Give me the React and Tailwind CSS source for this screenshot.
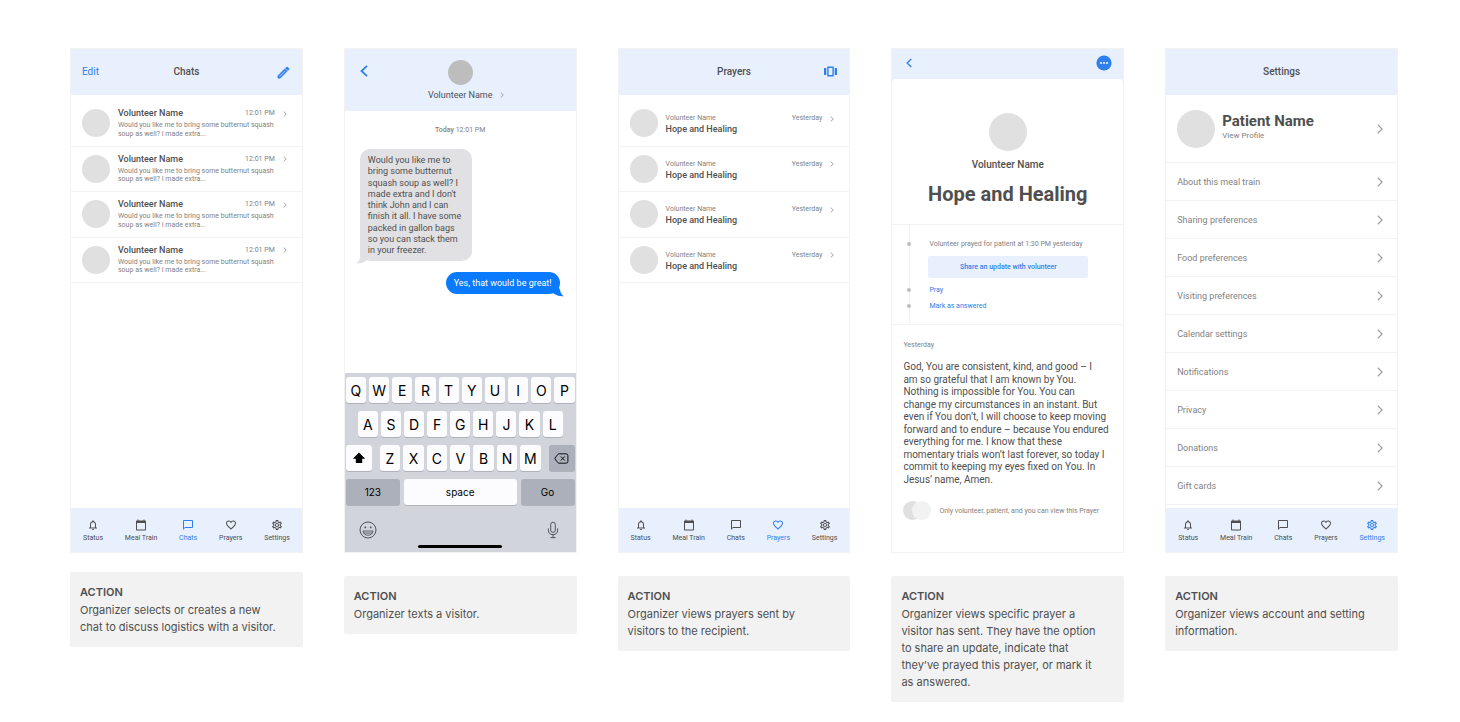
import React from "react";
import clsx from "clsx";
import { MdNotificationsNone, MdFavoriteBorder, MdOutlineSettings } from "react-icons/md";

function Chevron({ className }) {
  return (
    <svg viewBox="0 0 6 10" fill="none" stroke="currentColor" className={className} aria-hidden="true">
      <path d="M0.8 0.8 L5.1 5 L0.8 9.2" strokeWidth="1.2" />
    </svg>
  );
}

function BackIcon({ className }) {
  return (
    <svg viewBox="0 0 8 12" fill="none" stroke="currentColor" className={className} aria-hidden="true">
      <path d="M7 0.8 L1.5 6 L7 11.2" strokeWidth="1.8" />
    </svg>
  );
}

function PencilIcon({ className }) {
  return (
    <svg viewBox="0 0 24 24" fill="currentColor" stroke="currentColor" strokeWidth="0.9" className={className} aria-hidden="true">
      <path d="M14.06 9.02l.92.92L5.92 19H5v-.92l9.06-9.06M17.66 3c-.25 0-.51.1-.7.29l-1.83 1.83 3.75 3.75 1.83-1.83a.996.996 0 0 0 0-1.41l-2.34-2.34c-.2-.2-.45-.29-.71-.29zm-3.6 3.19L3 17.25V21h3.75L17.81 9.94l-3.75-3.75z" fillRule="evenodd" />
    </svg>
  );
}

function CarouselIcon({ className }) {
  return (
    <svg viewBox="0 0 13 11" fill="currentColor" className={className} aria-hidden="true">
      <rect x="0" y="2" width="2.3" height="7" />
      <rect x="10.7" y="2" width="2.3" height="7" />
      <path d="M3.2 0.4 H9.8 V10.6 H3.2 Z M4.6 1.9 V9.1 H8.4 V1.9 Z" fillRule="evenodd" />
    </svg>
  );
}

function CalendarIcon({ className }) {
  return (
    <svg viewBox="0 0 24 24" fill="currentColor" className={className} aria-hidden="true">
      <path d="M20 3h-1V1h-2v2H7V1H5v2H4c-1.1 0-2 .9-2 2v16c0 1.1.9 2 2 2h16c1.1 0 2-.9 2-2V5c0-1.1-.9-2-2-2zm0 18H4V8h16v13z" />
    </svg>
  );
}

function ChatIcon({ className }) {
  return (
    <svg viewBox="0 0 24 24" fill="currentColor" className={className} aria-hidden="true">
      <path d="M20 2H4c-1.1 0-2 .9-2 2v18l4-4h14c1.1 0 2-.9 2-2V4c0-1.1-.9-2-2-2zm0 14H6l-2 2V4h16v12z" />
    </svg>
  );
}

const TABS = [
  { label: "Status", Icon: MdNotificationsNone },
  { label: "Meal Train", Icon: CalendarIcon },
  { label: "Chats", Icon: ChatIcon },
  { label: "Prayers", Icon: MdFavoriteBorder },
  { label: "Settings", Icon: MdOutlineSettings },
];

function TabBar({ active }) {
  return (
    <nav className="flex h-[44px] items-center justify-between bg-[#e8f0fe] px-3 pt-px">
      {TABS.map(({ label, Icon }) => (
        <a
          key={label}
          href="#"
          className={clsx(
            "flex flex-col items-center gap-[3px] text-[7px] leading-[8px]",
            label === active ? "text-[#2f80ed]" : "text-[#4f4f4f]"
          )}
        >
          <Icon className="size-[12px]" />
          {label}
        </a>
      ))}
    </nav>
  );
}

function Column({ children, caption, tight }) {
  return (
    <section className="min-w-0">
      <div className="flex h-[505px] flex-col overflow-hidden border border-[#f2f2f2] bg-white">{children}</div>
      <div
        className={clsx(
          "rounded-[2px] bg-[#f2f2f2] pt-3 pr-6 pb-[11px] pl-[10px] font-[Inter,sans-serif] text-[11px] leading-[17px] text-[#4f4f4f]",
          tight ? "mt-[19px]" : "mt-[23px]"
        )}
      >
        <h2 className="font-semibold">ACTION</h2>
        <p className="mt-px">{caption}</p>
      </div>
    </section>
  );
}

function TitleBar({ title, left, right }) {
  return (
    <header className="grid h-[46px] shrink-0 grid-cols-[1fr_auto_1fr] items-center bg-[#e8f0fe] px-[11px] text-[10px] leading-[12px]">
      <div>{left}</div>
      <h1 className="font-medium text-[#4f4f4f]">{title}</h1>
      <div className="flex justify-end">{right}</div>
    </header>
  );
}

const FOUR = [0, 1, 2, 3];

function ChatsScreen() {
  return (
    <>
      <TitleBar
        title="Chats"
        left={<button className="text-[#2f80ed]">Edit</button>}
        right={
          <button aria-label="New chat" className="text-[#2f80ed]">
            <PencilIcon className="size-[15px]" />
          </button>
        }
      />
      <ul className="mt-[6px] grid h-[182px] shrink-0 grid-rows-4">
        {FOUR.map((i) => (
          <li key={i} className="flex items-center gap-2 border-b border-[#f2f2f2] pr-[15px] pl-[11px]">
            <div className="size-[28px] shrink-0 rounded-full bg-[#e0e0e0]" />
            <div className="min-w-0 flex-1">
              <div className="flex items-center leading-[11px]">
                <h2 className="flex-1 text-[9px] font-medium text-[#4f4f4f]">Volunteer Name</h2>
                <time className="text-[7px] text-[#828282]">12:01 PM</time>
                <Chevron className="ml-2 h-[6px] w-[4px] text-[#828282]" />
              </div>
              <p className="mt-[2px] pr-2 text-[7px] leading-tight text-[#828282]">
                Would you like me to bring some butternut squash soup as well? I made extra...
              </p>
            </div>
          </li>
        ))}
      </ul>
      <div className="flex-1" />
      <TabBar active="Chats" />
    </>
  );
}

function PrayersScreen() {
  return (
    <>
      <TitleBar
        title="Prayers"
        right={
          <button aria-label="Carousel view" className="mr-px pb-px text-[#2f80ed]">
            <CarouselIcon className="h-[11px] w-[13px]" />
          </button>
        }
      />
      <ul className="mt-[6px] grid h-[182px] shrink-0 grid-rows-4">
        {FOUR.map((i) => (
          <li key={i} className="flex items-center gap-2 border-b border-[#f2f2f2] pr-[15px] pl-[11px]">
            <div className="size-[28px] shrink-0 rounded-full bg-[#e0e0e0]" />
            <div className="min-w-0 flex-1 pt-[2px] leading-[11px] text-[#828282]">
              <div className="flex items-center text-[7px]">
                <p className="flex-1">Volunteer Name</p>
                <time>Yesterday</time>
                <Chevron className="ml-2 h-[6px] w-[4px]" />
              </div>
              <h2 className="text-[9px] font-medium text-[#4f4f4f]">Hope and Healing</h2>
            </div>
          </li>
        ))}
      </ul>
      <div className="flex-1" />
      <TabBar active="Prayers" />
    </>
  );
}

const KEY = "flex h-[26px] items-center justify-center rounded-[3px] shadow-[0_1px_0_#8d909680]";

function LetterKeys({ letters }) {
  return letters.split("").map((c) => (
    <button key={c} className={clsx(KEY, "min-w-0 flex-1 bg-[#fcfcfe] text-[14px]")}>
      {c}
    </button>
  ));
}

function Keyboard() {
  return (
    <div className="flex h-[179px] flex-col bg-[#d1d4db] px-px pt-1 font-[Inter,sans-serif] text-black">
      <div className="flex flex-col gap-2">
        <div className="flex gap-[3px]">
          <LetterKeys letters="QWERTYUIOP" />
        </div>
        <div className="flex gap-[3px] px-3">
          <LetterKeys letters="ASDFGHJKL" />
        </div>
        <div className="flex justify-between gap-2">
          <button aria-label="Shift" className={clsx(KEY, "w-[26px] bg-[#fcfcfe]")}>
            <svg viewBox="0 0 14 12" className="h-[12px] w-[14px]" fill="currentColor" aria-hidden="true">
              <path d="M7 0.6 L13.2 6.8 H10.2 V10.4 Q10.2 11 9.6 11 H4.4 Q3.8 11 3.8 10.4 V6.8 H0.8 Z" />
            </svg>
          </button>
          <div className="flex flex-1 gap-[3px]">
            <LetterKeys letters="ZXCVBNM" />
          </div>
          <button aria-label="Delete" className={clsx(KEY, "w-[26px] bg-[#abb0ba]")}>
            <svg viewBox="0 0 16 12" className="h-[11px] w-[15px]" fill="none" stroke="currentColor" aria-hidden="true">
              <path d="M5.2 0.9 H13 Q15 0.9 15 2.9 V9.1 Q15 11.1 13 11.1 H5.2 Q4.6 11.1 4.1 10.6 L0.9 6.5 Q0.6 6 0.9 5.5 L4.1 1.4 Q4.6 0.9 5.2 0.9 Z" />
              <path d="M7.2 3.8 L11.6 8.2 M11.6 3.8 L7.2 8.2" />
            </svg>
          </button>
        </div>
        <div className="flex gap-1 text-[10px]">
          <button className={clsx(KEY, "w-[54px] bg-[#abb0ba]")}>123</button>
          <button className={clsx(KEY, "flex-1 bg-[#fcfcfe]")}>space</button>
          <button className={clsx(KEY, "w-[54px] bg-[#abb0ba]")}>Go</button>
        </div>
      </div>
      <div className="mt-4 flex items-center justify-between pr-4 pl-[13px] text-[#50555c]">
        <button aria-label="Emoji">
          <svg viewBox="0 0 18 18" className="size-[18px]" fill="none" stroke="currentColor" aria-hidden="true">
            <circle cx="9" cy="9" r="8" />
            <path d="M4 10 H14 Q13.4 14.2 9 14.2 Q4.6 14.2 4 10 Z M4.8 12 H13.2" strokeWidth="0.9" />
            <circle cx="6.3" cy="6.4" r="0.9" fill="currentColor" stroke="none" />
            <circle cx="11.7" cy="6.4" r="0.9" fill="currentColor" stroke="none" />
          </svg>
        </button>
        <button aria-label="Dictate">
          <svg viewBox="0 0 12 18" className="h-[18px] w-[12px]" fill="none" stroke="currentColor" aria-hidden="true">
            <rect x="3.7" y="1.2" width="4.6" height="10.2" rx="2.3" />
            <path d="M1.4 7.5 V9.2 Q1.4 13.6 6 13.6 Q10.6 13.6 10.6 9.2 V7.5 M6 13.6 V16.6 M3.4 16.6 H8.6" />
          </svg>
        </button>
      </div>
      <div className="mx-auto mt-[6px] h-[3px] w-[84px] rounded-full bg-black" />
    </div>
  );
}

function ConversationScreen() {
  return (
    <>
      <header className="grid h-[62px] shrink-0 grid-cols-[1fr_auto_1fr] bg-[#e8f0fe] px-[15px] pt-[11px]">
        <button aria-label="Back" className="h-[22px] justify-self-start text-[#2f80ed]">
          <BackIcon className="h-[12px] w-[8px]" />
        </button>
        <div className="flex flex-col items-center">
          <div className="size-[25px] rounded-full bg-[#bdbdbd]" />
          <h1 className="mt-1 text-[9px] leading-[12px] text-[#4f4f4f]">Volunteer Name</h1>
        </div>
        <Chevron className="mb-[13px] ml-2 h-[6px] w-[4px] self-end text-[#828282]" />
      </header>
      <p className="mt-[14px] text-center text-[7px] leading-[10px] text-[#828282]">
        <span className="font-medium">Today</span> 12:01 PM
      </p>
      <div className="mt-[14px] flex flex-col items-start pr-4 pl-[15px]">
        <div className="relative w-[112px] rounded-[10px] bg-[#e1e1e4] px-2 pt-[6px] pb-[5px] text-[9px] leading-tight text-[#4f4f4f]">
          <svg viewBox="0 0 14 12" className="absolute -bottom-[3px] -left-1 h-[12px] w-[14px]" fill="#e1e1e4" aria-hidden="true">
            <path d="M4 0 V5 Q3.6 9.6 0 11.2 Q5.4 12.4 9.5 9 L14 6 V0 Z" />
          </svg>
          <p className="relative">
            Would you like me to bring some butternut squash soup as well? I made extra and I don't think John and I can finish it all. I have some packed in gallon bags so you can stack them in your freezer.
          </p>
        </div>
        <div className="relative mt-[11px] self-end rounded-full bg-[#0a7aff] px-2 py-[5px] text-[9px] leading-[12px] text-white">
          <svg viewBox="0 0 14 12" className="absolute -right-1 -bottom-[3px] h-[12px] w-[14px]" fill="#0a7aff" aria-hidden="true">
            <path d="M8 0 L10 5 Q10.8 9.6 14 11.2 Q8.6 11.8 4.5 9 L0 6 V0 Z" />
          </svg>
          <p className="relative">Yes, that would be great!</p>
        </div>
      </div>
      <div className="flex-1" />
      <Keyboard />
    </>
  );
}

function TimelineItem({ children }) {
  return (
    <div className="flex items-center">
      <div className="size-[4px] shrink-0 rounded-full bg-[#bdbdbd]" />
      <div className="ml-[18px]">{children}</div>
    </div>
  );
}

const PRAYER = `God, You are consistent, kind, and good – I
am so grateful that I am known by You.
Nothing is impossible for You. You can
change my circumstances in an instant. But
even if You don’t, I will choose to keep moving
forward and to endure – because You endured
everything for me. I know that these
momentary trials won’t last forever, so today I
commit to keeping my eyes fixed on You. In
Jesus’ name, Amen.`;

function PrayerScreen() {
  return (
    <div className="flex flex-1 flex-col bg-[#e8f0fe]">
      <header className="flex h-[30px] shrink-0 items-center justify-between px-[11px] pb-[2px]">
        <button aria-label="Back" className="ml-[3px] text-[#2f80ed]">
          <BackIcon className="h-[10px] w-[6px]" />
        </button>
        <button aria-label="More options">
          <svg viewBox="0 0 16 16" className="size-[16px]" aria-hidden="true">
            <circle cx="8" cy="8" r="7.6" fill="#2f80ed" />
            <circle cx="5" cy="8" r="1" fill="#fff" />
            <circle cx="8" cy="8" r="1" fill="#fff" />
            <circle cx="11" cy="8" r="1" fill="#fff" />
          </svg>
        </button>
      </header>
      <div className="flex-1 rounded-t-[4px] bg-white">
        <div className="flex h-[146px] flex-col items-center border-b border-[#f2f2f2] pt-[34px] text-[#4f4f4f]">
          <div className="size-[38px] rounded-full bg-[#e0e0e0]" />
          <h2 className="mt-2 text-[10px] leading-[12px] font-medium">Volunteer Name</h2>
          <h1 className="mt-[11px] text-[20px] leading-[24px] font-bold">Hope and Healing</h1>
        </div>
        <div className="relative h-[100px] border-b border-[#f2f2f2] pt-[14px] pl-[15px] text-[7px] leading-[10px]">
          <div className="absolute inset-y-0 left-[17px] w-px bg-[#f2f2f2]" />
          <div className="relative">
            <TimelineItem>
              <p className="text-[#828282]">Volunteer prayed for patient at 1:30 PM yesterday</p>
            </TimelineItem>
            <button className="mt-[7px] ml-[21px] flex h-[22px] w-[160px] items-center justify-center rounded-[2px] bg-[#e8f0fe] font-medium text-[#2f80ed]">
              Share an update with volunteer
            </button>
            <div className="mt-[7px] flex flex-col gap-[6px] text-[#2f80ed]">
              <TimelineItem>
                <button className="block">Pray</button>
              </TimelineItem>
              <TimelineItem>
                <button className="block">Mark as answered</button>
              </TimelineItem>
            </div>
          </div>
        </div>
        <div className="px-[11px] pt-[15px]">
          <p className="text-[7px] leading-[10px] text-[#828282]">Yesterday</p>
          <p className="mt-[11px] text-[10px] leading-tight whitespace-pre-line text-[#4f4f4f]">{PRAYER}</p>
          <div className="mt-[15px] flex items-center text-[7px] leading-[10px] text-[#828282]">
            <div className="size-[19px] rounded-full bg-[#e0e0e0]" />
            <div className="-ml-[10px] size-[19px] rounded-full bg-[#f2f2f2]" />
            <p className="ml-2">Only volunteer, patient, and you can view this Prayer</p>
          </div>
        </div>
      </div>
    </div>
  );
}

const SETTINGS = [
  "About this meal train",
  "Sharing preferences",
  "Food preferences",
  "Visiting preferences",
  "Calendar settings",
  "Notifications",
  "Privacy",
  "Donations",
  "Gift cards",
];

function SettingsScreen() {
  return (
    <>
      <TitleBar title="Settings" />
      <a href="#" className="flex h-[68px] shrink-0 items-center border-b border-[#f2f2f2] pr-[14px] pl-[11px]">
        <div className="size-[38px] rounded-full bg-[#e0e0e0]" />
        <div className="ml-[7px] flex-1 pb-[5px]">
          <h2 className="text-[15px] leading-[18px] font-bold text-[#4f4f4f]">Patient Name</h2>
          <p className="mt-px text-[8px] leading-[10px] text-[#828282]">View Profile</p>
        </div>
        <Chevron className="h-[10px] w-[6px] text-[#a0a0a0]" />
      </a>
      <ul className="shrink-0">
        {SETTINGS.map((s) => (
          <li key={s} className="border-b border-[#f2f2f2]">
            <a href="#" className="flex h-[37px] items-center justify-between pr-[14px] pl-[11px] text-[9px] leading-[12px] text-[#828282]">
              {s}
              <Chevron className="h-[10px] w-[6px] text-[#a0a0a0]" />
            </a>
          </li>
        ))}
      </ul>
      <div className="flex-1" />
      <TabBar active="Settings" />
    </>
  );
}

export default function App() {
  return (
    <main className="grid min-h-screen grid-cols-5 items-start gap-[41px] bg-white pt-12 pr-[62px] pl-[70px] font-[Roboto,sans-serif]">
      <Column tight caption="Organizer selects or creates a new chat to discuss logistics with a visitor.">
        <ChatsScreen />
      </Column>
      <Column caption="Organizer texts a visitor.">
        <ConversationScreen />
      </Column>
      <Column caption="Organizer views prayers sent by visitors to the recipient.">
        <PrayersScreen />
      </Column>
      <Column caption="Organizer views specific prayer a visitor has sent. They have the option to share an update, indicate that they’ve prayed this prayer, or mark it as answered.">
        <PrayerScreen />
      </Column>
      <Column caption="Organizer views account and setting information.">
        <SettingsScreen />
      </Column>
    </main>
  );
}
